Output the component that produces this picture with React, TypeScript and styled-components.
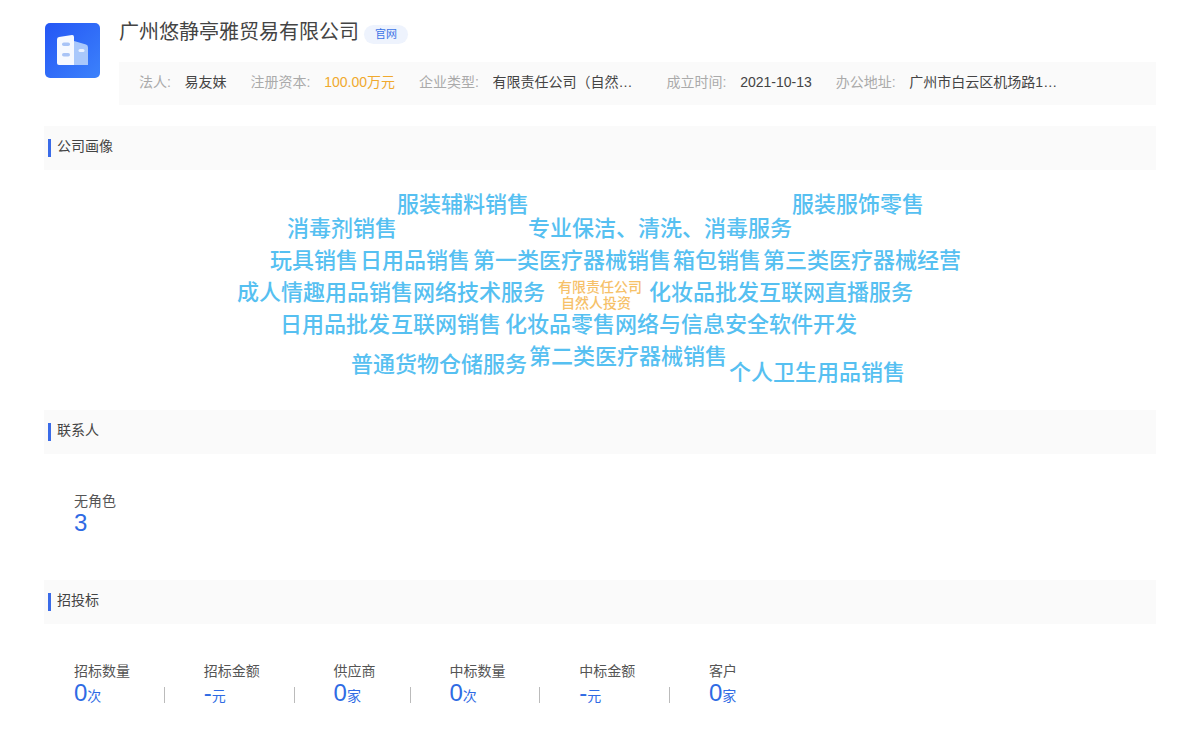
import { Fragment } from "react";
import styled, { createGlobalStyle } from "styled-components";

const GlobalStyle = createGlobalStyle`
  html, body {
    margin: 0;
    padding: 0;
    background: #fff;
    font-family: "Liberation Sans", "Noto Sans CJK SC", sans-serif;
  }
`;

const Page = styled.div`
  width: 1200px;
  box-sizing: border-box;
  padding: 18px 44px 0;
`;

const Header = styled.header`
  display: flex;
  align-items: flex-start;
`;

const Logo = styled.svg`
  width: 55px;
  height: 55px;
  margin: 5px 19px 0 1px;
  flex: none;
`;

const HeaderBody = styled.div`
  flex: 1;
  min-width: 0;
`;

const TitleRow = styled.div`
  display: flex;
  align-items: center;
  height: 28px;
`;

const Title = styled.h1`
  margin: 0;
  font-size: 20px;
  line-height: 28px;
  font-weight: 400;
  color: #444;
`;

const SiteTag = styled.span`
  margin: 4px 0 0 5px;
  width: 44px;
  height: 19px;
  border-radius: 10px;
  background: #eef3fd;
  color: #3b73e6;
  font-size: 11px;
  line-height: 19px;
  text-align: center;
`;

const InfoBar = styled.div`
  display: flex;
  align-items: center;
  gap: 24px;
  box-sizing: border-box;
  height: 43px;
  margin-top: 16px;
  padding: 0 0 3px 20px;
  background: #fafafa;
  font-size: 14px;
`;

const InfoField = styled.div`
  display: flex;
  align-items: baseline;
  line-height: 20px;
  white-space: nowrap;
`;

const InfoLabel = styled.span`
  color: #aaa;
  margin-right: 13.7px;
`;

const InfoValue = styled.span<{ $clip?: boolean; $money?: boolean }>`
  color: ${({ $money }) => ($money ? "#f0a92e" : "#444")};
  ${({ $clip }) =>
    $clip &&
    `
    width: 150px;
    overflow: hidden;
    text-overflow: ellipsis;
  `}
`;

const SectionHead = styled.div<{ $top: number }>`
  display: flex;
  align-items: center;
  height: 44px;
  margin-top: ${({ $top }) => $top}px;
  padding-left: 4px;
  background: #fafafa;
  font-size: 14px;
  line-height: 20px;
  color: #444;

  &::before {
    content: "";
    width: 3px;
    height: 18px;
    margin-right: 6px;
    background: #3a6be8;
  }
`;

const SectionText = styled.span`
  margin-bottom: 5px;
`;

const Cloud = styled.div`
  position: relative;
  height: 240px;
`;

const Word = styled.span<{ $x: number; $y: number }>`
  position: absolute;
  left: ${({ $x }) => $x}px;
  top: ${({ $y }) => $y}px;
  font-size: 22px;
  line-height: 30px;
  font-weight: 500;
  color: #56c0f1;
  white-space: nowrap;
`;

const SmallWord = styled(Word)`
  font-size: 14px;
  line-height: 18px;
  color: #f6c169;
`;

const StatRow = styled.div<{ $pad: number }>`
  display: flex;
  align-items: flex-end;
  padding: ${({ $pad }) => $pad}px 0 0 30px;
`;

const Stat = styled.div`
  display: flex;
  flex-direction: column;
`;

const StatLabel = styled.span`
  font-size: 14px;
  line-height: 20px;
  color: #555;
`;

const StatValue = styled.span`
  font-size: 24px;
  line-height: 24px;
  color: #2f6be4;
`;

const StatUnit = styled.span`
  font-size: 14px;
`;

const Divider = styled.i`
  width: 1px;
  height: 16px;
  margin: 0 38.8px 5px 34px;
  background: #bbb;
`;

const words = [
  { text: "服装辅料销售", x: 353, y: 20 },
  { text: "服装服饰零售", x: 748, y: 20 },
  { text: "消毒剂销售", x: 243, y: 44 },
  { text: "专业保洁、清洗、消毒服务", x: 484, y: 44 },
  { text: "玩具销售", x: 226, y: 76 },
  { text: "日用品销售", x: 316, y: 76 },
  { text: "第一类医疗器械销售", x: 429, y: 76 },
  { text: "箱包销售", x: 629, y: 76 },
  { text: "第三类医疗器械经营", x: 719, y: 76 },
  { text: "成人情趣用品销售", x: 193, y: 108 },
  { text: "网络技术服务", x: 369, y: 108 },
  { text: "化妆品批发", x: 605, y: 108 },
  { text: "互联网直播服务", x: 715, y: 108 },
  { text: "日用品批发", x: 236, y: 140 },
  { text: "互联网销售", x: 347, y: 140 },
  { text: "化妆品零售", x: 461, y: 140 },
  { text: "网络与信息安全软件开发", x: 571, y: 140 },
  { text: "普通货物仓储服务", x: 307, y: 180 },
  { text: "第二类医疗器械销售", x: 485, y: 172 },
  { text: "个人卫生用品销售", x: 685, y: 188 },
];

const bidStats = [
  { label: "招标数量", value: "0", unit: "次" },
  { label: "招标金额", value: "-", unit: "元" },
  { label: "供应商", value: "0", unit: "家" },
  { label: "中标数量", value: "0", unit: "次" },
  { label: "中标金额", value: "-", unit: "元" },
  { label: "客户", value: "0", unit: "家" },
];

export default function App() {
  return (
    <Page>
      <GlobalStyle />
      <Header>
        <Logo viewBox="0 0 55 55">
          <defs>
            <linearGradient id="logoBg" x1="0" y1="0" x2="1" y2="1">
              <stop offset="0" stopColor="#2456f5" />
              <stop offset="1" stopColor="#3c82fb" />
            </linearGradient>
          </defs>
          <rect width="55" height="55" rx="5" fill="url(#logoBg)" />
          <path d="M29 18l12 3.500q2 .6 2 3V42H29z" fill="#a9c8fb" />
          <path d="M12 16.500q0-2 2-2.400L27 12q2-.2 2 2V42H14q-2 0-2-2z" fill="#f6f9ff" />
          <rect x="17" y="19.500" width="8" height="3.500" rx="1.750" fill="#a9c4f6" />
          <rect x="17" y="30" width="8" height="3.500" rx="1.750" fill="#a9c4f6" />
          <rect x="33.500" y="26" width="6" height="3" rx="1.500" fill="#eaf2ff" />
        </Logo>
        <HeaderBody>
          <TitleRow>
            <Title>广州悠静亭雅贸易有限公司</Title>
            <SiteTag>官网</SiteTag>
          </TitleRow>
          <InfoBar>
            <InfoField>
              <InfoLabel>法人:</InfoLabel>
              <InfoValue>易友妹</InfoValue>
            </InfoField>
            <InfoField>
              <InfoLabel>注册资本:</InfoLabel>
              <InfoValue $money>100.00万元</InfoValue>
            </InfoField>
            <InfoField>
              <InfoLabel>企业类型:</InfoLabel>
              <InfoValue $clip>有限责任公司（自然人投资或控股）</InfoValue>
            </InfoField>
            <InfoField>
              <InfoLabel>成立时间:</InfoLabel>
              <InfoValue>2021-10-13</InfoValue>
            </InfoField>
            <InfoField>
              <InfoLabel>办公地址:</InfoLabel>
              <InfoValue $clip>广州市白云区机场路1632号之一</InfoValue>
            </InfoField>
          </InfoBar>
        </HeaderBody>
      </Header>

      <SectionHead $top={21}>
        <SectionText>公司画像</SectionText>
      </SectionHead>
      <Cloud>
        {words.map((w) => (
          <Word key={w.text} $x={w.x} $y={w.y}>
            {w.text}
          </Word>
        ))}
        <SmallWord $x={514} $y={108}>有限责任公司</SmallWord>
        <SmallWord $x={517} $y={124}>自然人投资</SmallWord>
      </Cloud>

      <SectionHead $top={0}>
        <SectionText>联系人</SectionText>
      </SectionHead>
      <StatRow $pad={37}>
        <Stat>
          <StatLabel>无角色</StatLabel>
          <StatValue>3</StatValue>
        </Stat>
      </StatRow>

      <SectionHead $top={45}>
        <SectionText>招投标</SectionText>
      </SectionHead>
      <StatRow $pad={37}>
        {bidStats.map((s, i) => (
          <Fragment key={s.label}>
            <Stat>
              <StatLabel>{s.label}</StatLabel>
              <StatValue>
                {s.value}
                <StatUnit>{s.unit}</StatUnit>
              </StatValue>
            </Stat>
            {i < bidStats.length - 1 && <Divider />}
          </Fragment>
        ))}
      </StatRow>
    </Page>
  );
}
